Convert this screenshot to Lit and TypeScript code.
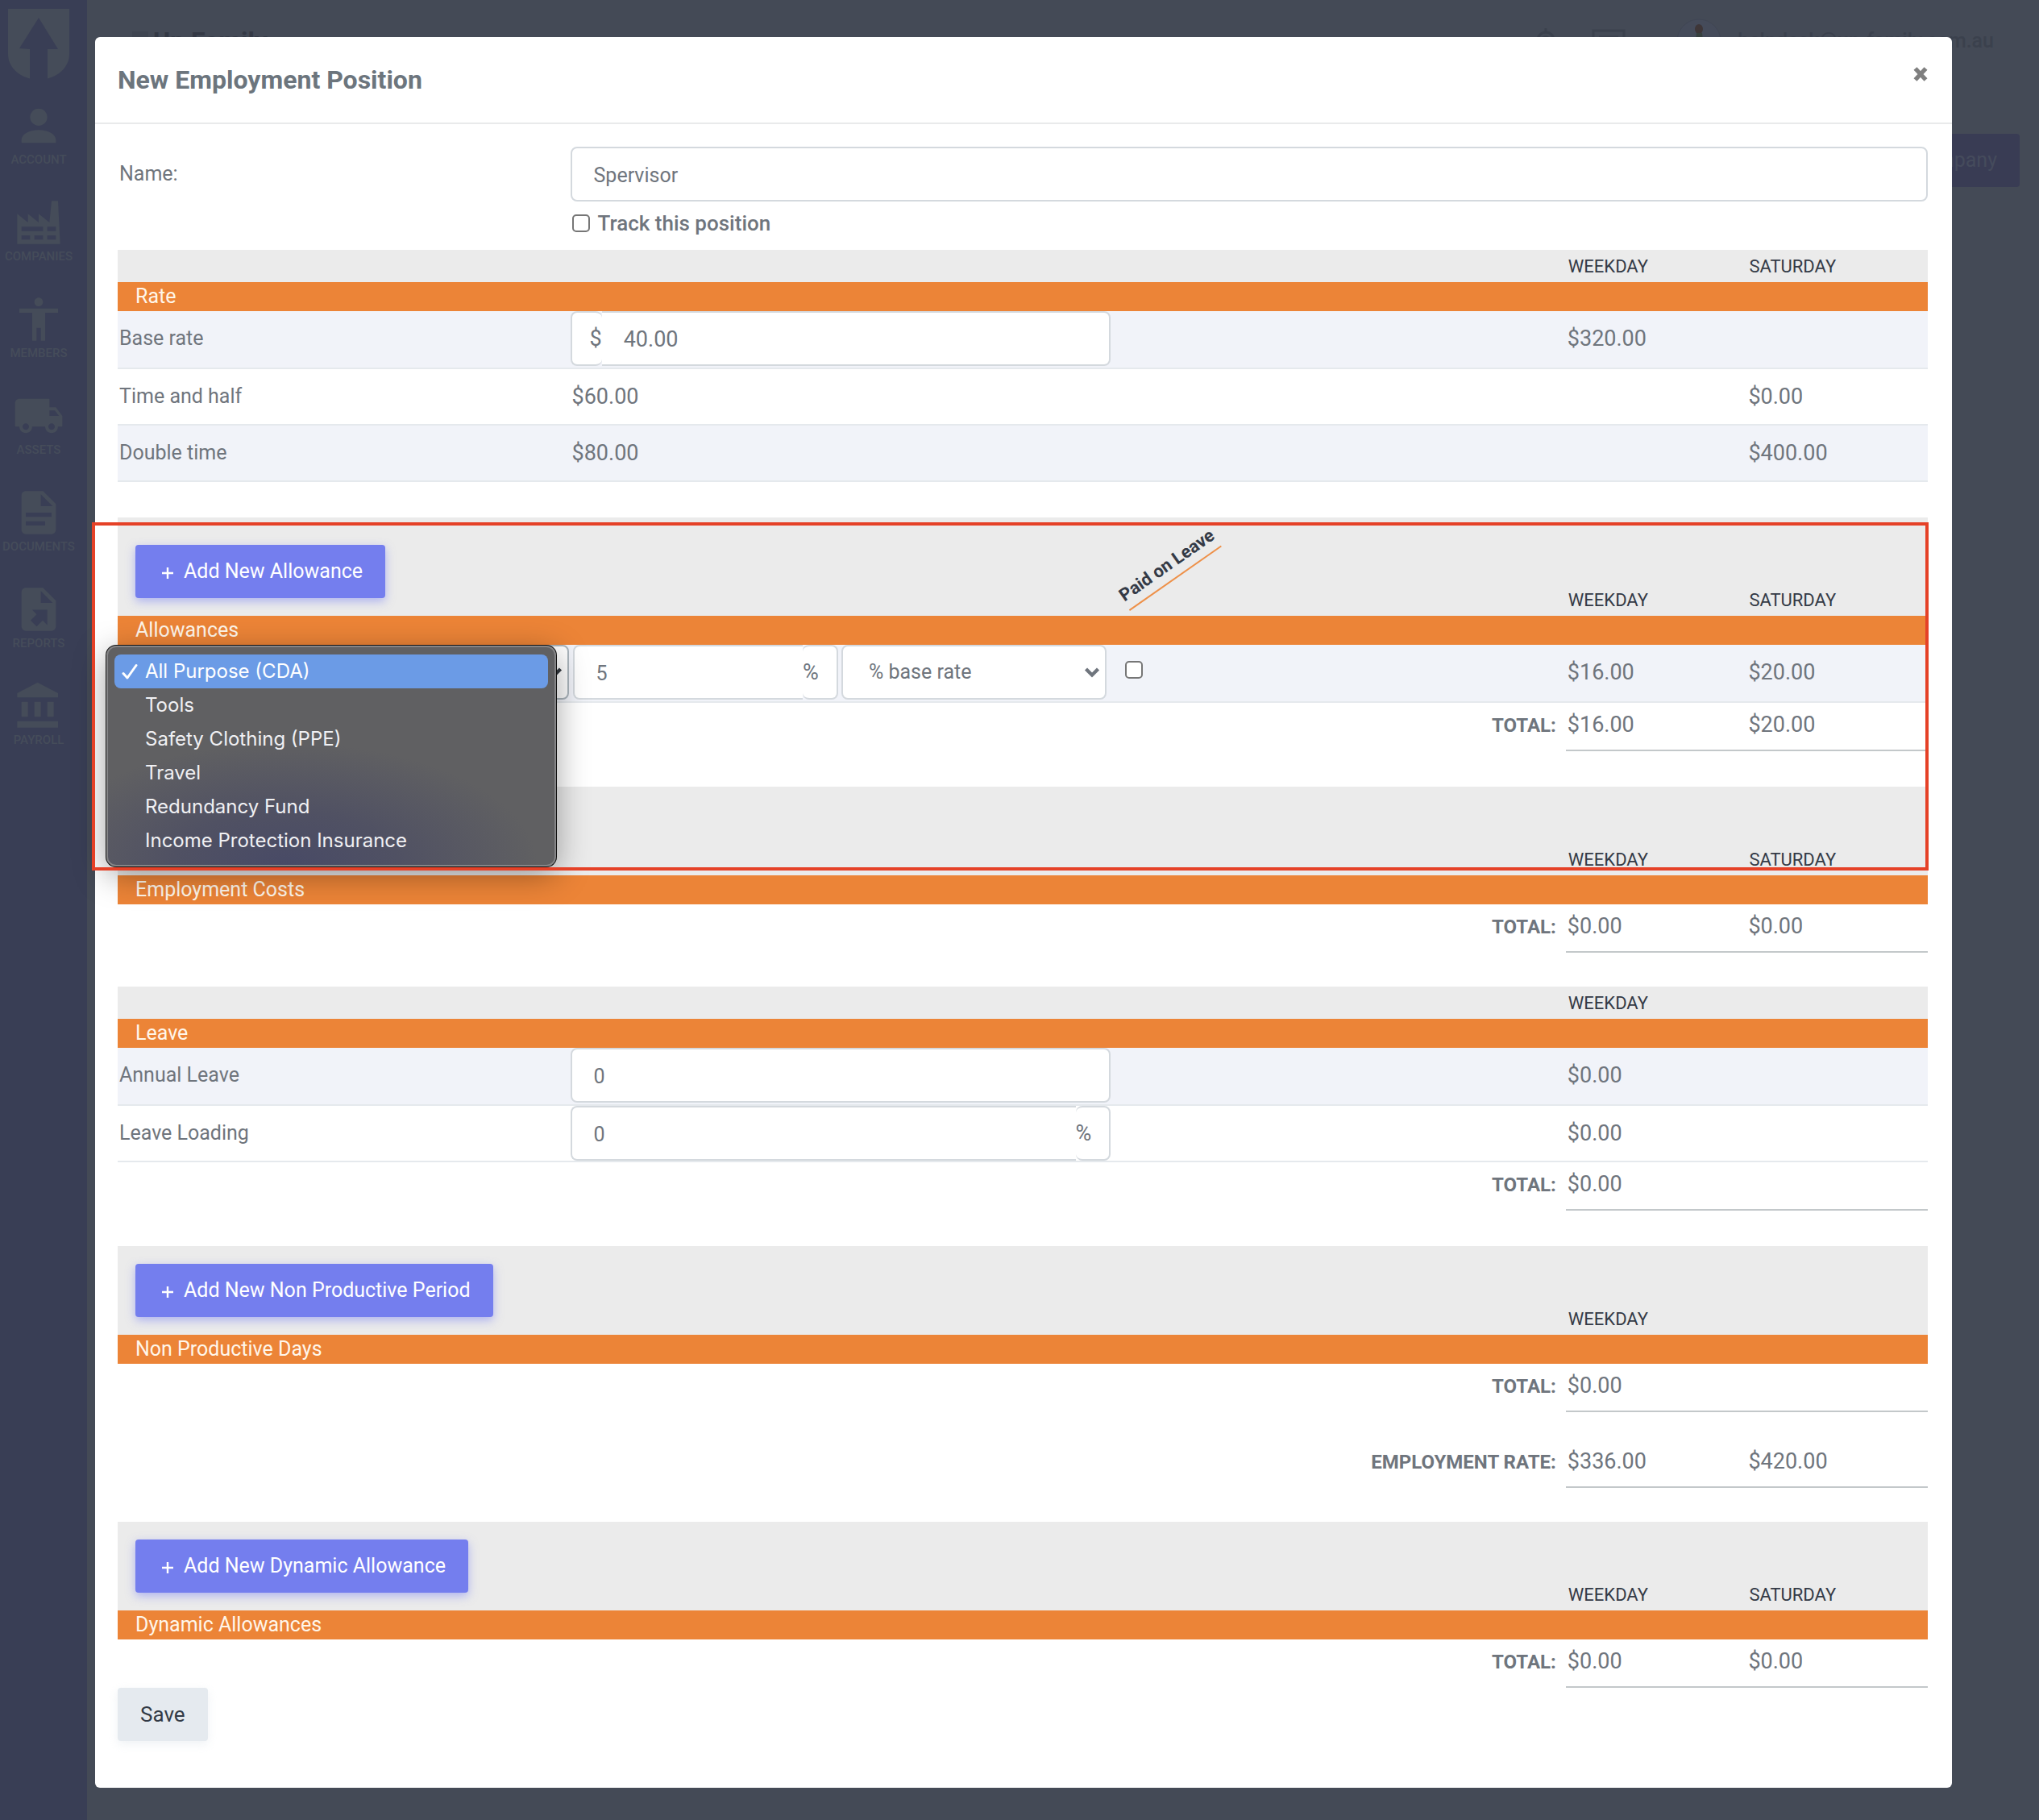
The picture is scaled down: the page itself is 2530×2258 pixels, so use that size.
import { LitElement, html, css, svg, nothing, TemplateResult } from "lit";
import { customElement, property } from "lit/decorators.js";

const ICONS: Record<string, string> = {
  account:
    "M12 12c2.21 0 4-1.79 4-4s-1.79-4-4-4-4 1.79-4 4 1.79 4 4 4zm0 2c-4.4 0-8 2-8 4.6V20h16v-1.4c0-2.6-3.6-4.6-8-4.6z",
  companies:
    "M4,18V20H8V18H4M4,14V16H14V14H4M10,18V20H14V18H10M16,14V16H20V14H16M16,18V20H20V18H16M2,22V8L7,12V8L12,12V8L17,12L18,2H21L22,22H2Z",
  members:
    "M12 2c1.1 0 2 .9 2 2s-.9 2-2 2-2-.9-2-2 .9-2 2-2zm9 7h-6v13h-2v-6h-2v6H9V9H3V7h18v2z",
  assets:
    "M20 8h-3V4H3c-1.1 0-2 .9-2 2v11h2c0 1.66 1.34 3 3 3s3-1.34 3-3h6c0 1.66 1.34 3 3 3s3-1.34 3-3h2v-5l-3-4zM6 18.5c-.83 0-1.5-.67-1.5-1.5s.67-1.5 1.5-1.5 1.5.67 1.5 1.5-.67 1.5-1.5 1.5zm13.5-9l1.96 2.5H17V9.5h2.5zm-1.5 9c-.83 0-1.5-.67-1.5-1.5s.67-1.5 1.5-1.5 1.5.67 1.5 1.5-.67 1.5-1.5 1.5z",
  documents:
    "M13,9H18.5L13,3.5V9M6,2H14L20,8V20A2,2 0 0,1 18,22H6C4.89,22 4,21.1 4,20V4C4,2.89 4.89,2 6,2M15,18V16H6V18H15M18,14V12H6V14H18Z",
  reports:
    "M6,2C4.89,2 4,2.9 4,4V20A2,2 0 0,0 6,22H18A2,2 0 0,0 20,20V8L14,2M13,3.5L18.5,9H13M8.93,12.22H16V19.29L13.88,17.17L11.05,20L8.22,17.17L11.05,14.35",
  payroll:
    "M11.5,1L2,6V8H21V6M16,10V17H19V10M2,22H21V19H2M10,10V17H13V10M4,10V17H7V10H4Z",
};

const ALLOWANCES = [
  "All Purpose (CDA)",
  "Tools",
  "Safety Clothing (PPE)",
  "Travel",
  "Redundancy Fund",
  "Income Protection Insurance",
];

const chevron = html`<svg class="chevron" viewBox="0 0 20 14" aria-hidden="true">
  <path d="M2.5 3 L10 10.5 L17.5 3" fill="none" stroke="currentColor" stroke-width="4.4" />
</svg>`;

/* The application that sits dimmed behind the dialog. */
@customElement("dimmed-app")
class DimmedApp extends LitElement {
  static styles = css`
    :host {
      display: grid;
      grid-template-columns: 108px 1fr;
      background: #444a56;
      font-family: Roboto, "Liberation Sans", sans-serif;
      overflow: hidden;
    }
    nav {
      display: flex;
      flex-direction: column;
      align-items: center;
      gap: 36px;
      padding: 11px 12px 0 0;
      background: #393e55;
    }
    .logo {
      width: 76px;
      height: 88px;
      margin-bottom: -11px;
      fill: #454c59;
    }
    nav a {
      display: flex;
      flex-direction: column;
      align-items: center;
      color: #454c5a;
      font-size: 15px;
      font-weight: 500;
      line-height: 20px;
      text-decoration: none;
    }
    nav a svg {
      width: 64px;
      height: 64px;
      fill: #454c59;
    }
    .main {
      display: flex;
      flex-direction: column;
    }
    header {
      display: flex;
      align-items: center;
      height: 102px;
      padding: 0 56px;
      color: #3b414d;
    }
    .mark {
      width: 20px;
      height: 24px;
      margin-right: 6px;
      background: #3f4551;
    }
    h1 {
      margin: 0;
      flex: 1;
      font-size: 32px;
      line-height: 40px;
      color: #343945;
    }
    .tool {
      width: 44px;
      height: 48px;
      margin-right: 34px;
      fill: none;
      stroke: #3b414d;
      stroke-width: 3;
    }
    .avatar {
      width: 56px;
      height: 56px;
      margin: 0 20px 0 28px;
    }
    .mail {
      font-size: 25px;
      line-height: 32px;
      font-weight: 500;
      color: #3b414d;
    }
    .actions {
      display: flex;
      justify-content: flex-end;
      padding: 64px 24px;
    }
    button {
      height: 66px;
      padding: 0 28px;
      border: 0;
      border-radius: 4px;
      background: #393c54;
      color: #454b5c;
      font: 400 25px/32px Roboto, "Liberation Sans", sans-serif;
    }
  `;

  render() {
    return html`
      <nav aria-label="Main">
        <svg class="logo" viewBox="0 0 76 88" aria-hidden="true">
          <path d="M0 0H76V56C76 70 66 82 49 86.500V50H62L38 11L14 49L27 50V86.500C10 82 0 70 0 56Z" />
        </svg>
        ${Object.entries(ICONS).map(
          ([name, d]) => html`<a href="#${name}">
            <svg viewBox="0 0 24 24" aria-hidden="true"><path fill-rule="evenodd" d=${d} /></svg>
            <span>${name.toUpperCase()}</span>
          </a>`
        )}
      </nav>
      <div class="main">
        <header>
          <span class="mark"></span>
          <h1>Up Family</h1>
          <svg class="tool" viewBox="0 0 44 48" aria-hidden="true">
            <path d="M22 8v5M12 38V23a10 10 0 0 1 20 0v15zM17 23a5 5 0 0 1 8-3" />
          </svg>
          <svg class="tool" viewBox="0 0 44 48" aria-hidden="true">
            <path d="M3 11h38v30H3zM10 19h24M10 27h24" />
          </svg>
          <svg class="avatar" viewBox="0 0 56 56" aria-hidden="true">
            <circle cx="28" cy="28" r="27" fill="#454b5a" stroke="#404654" />
            <ellipse cx="28" cy="13" rx="5" ry="6" fill="#3e3638" />
            <path d="M25 18h7l2 20H23z" fill="#37413f" />
          </svg>
          <span class="mail">helpdesk@up-family.com.au</span>
        </header>
        <div class="actions"><button type="button">Add New Company</button></div>
      </div>
    `;
  }
}

interface Section {
  title: string;
  add?: string;
  tall?: boolean;
  paidOnLeave?: boolean;
  saturday?: boolean;
  rows?: TemplateResult[];
  totals?: { label: string; values: string[] }[];
}

@customElement("app-root")
class AppRoot extends LitElement {
  @property() positionName = "Spervisor";

  static styles = css`
    * {
      box-sizing: border-box;
    }
    :host {
      display: block;
      position: relative;
      min-height: 100vh;
      overflow: hidden;
      font: 400 25px/32px Roboto, "Liberation Sans", sans-serif;
      color: #6f757d;
    }
    dimmed-app {
      position: absolute;
      inset: 0;
    }
    .modal {
      position: relative;
      margin: 46px 108px 40px 118px;
      border-radius: 6px;
      background: #fff;
    }
    .modal-header {
      display: flex;
      align-items: center;
      justify-content: space-between;
      height: 108px;
      padding: 0 30px 0 28px;
      border-bottom: 2px solid #e9eaeb;
    }
    h2 {
      margin: 0;
      font-size: 32px;
      line-height: 40px;
      font-weight: 700;
      color: #6c757d;
    }
    .close {
      display: flex;
      margin-bottom: 14px;
      padding: 0;
      border: 0;
      background: none;
      color: #7f7f7f;
    }
    .close svg {
      width: 18px;
      height: 18px;
    }
    form {
      padding: 28px 30px 58px 28px;
    }
    .name-row {
      display: grid;
      grid-template-columns: 25% 1fr;
      align-items: center;
    }
    .name-row > label {
      padding-left: 2px;
    }
    .track {
      grid-column: 2;
      display: flex;
      align-items: center;
      gap: 10px;
      height: 54px;
      margin-bottom: 6px;
      font-size: 26px;
      font-weight: 500;
    }
    input,
    select {
      font: inherit;
      color: inherit;
      min-width: 0;
    }
    .box {
      width: 100%;
      height: 68px;
      padding: 2px 27px 0;
      border: 2px solid #d4d9de;
      border-radius: 8px;
      background: #fff;
      outline: none;
    }
    input.num {
      font-size: 27px;
    }
    input[type="checkbox"] {
      appearance: none;
      display: block;
      flex: none;
      width: 22px;
      height: 22px;
      margin: 0;
      border: 2px solid #767676;
      border-radius: 5px;
      background: #fff;
    }
    .group {
      display: flex;
      width: 100%;
    }
    .addon {
      display: flex;
      align-items: center;
      height: 68px;
      border: 2px solid #d4d9de;
      border-radius: 8px;
      background: #fff;
      font-size: 27px;
    }
    .addon.pre {
      padding-left: 22px;
      border-right: 0;
    }
    .addon.post {
      padding-right: 22px;
      border-left: 0;
    }
    .group .pre + .box {
      border-left: 0;
      border-radius: 0 8px 8px 0;
    }
    .group .box:not(:last-child) {
      border-right: 0;
      border-radius: 8px 0 0 8px;
    }
    .pick {
      position: relative;
      display: grid;
      width: 100%;
      align-items: center;
    }
    .pick select {
      grid-area: 1 / 1;
      appearance: none;
      padding: 0 32px;
    }
    .pick .chevron {
      grid-area: 1 / 1;
      justify-self: end;
      width: 20px;
      height: 14px;
      margin-right: 8px;
      pointer-events: none;
    }
    .pick.open select {
      border-color: #abb5bc;
    }
    .pick.open .chevron {
      color: #343a40;
    }
    .pair {
      display: grid;
      grid-template-columns: 1fr 1fr;
      gap: 4px;
    }

    table {
      width: 100%;
      table-layout: fixed;
      border-collapse: separate;
      border-spacing: 0;
      margin-bottom: 44px;
    }
    table.bare {
      margin-bottom: 42px;
    }
    table.last {
      margin-bottom: 0;
    }
    .label-col {
      width: 25%;
    }
    .field-col {
      width: 30%;
    }
    .flag-col {
      width: 25%;
    }
    .day-col {
      width: 10%;
    }
    th,
    td {
      padding: 0;
      text-align: left;
      font-weight: 400;
    }
    .heads th {
      height: 40px;
      padding: 0 3px 7px;
      vertical-align: bottom;
      background: #ebebeb;
      color: #343a46;
      font-size: 22px;
      line-height: 24px;
    }
    .heads.tall th {
      height: 110px;
    }
    .heads.slanted th {
      height: 122px;
    }
    .heads th.add {
      padding: 0 22px 22px;
    }
    .heads th.flag {
      position: relative;
    }
    .slant {
      position: absolute;
      left: 21px;
      bottom: 6px;
      width: 139px;
      padding: 0 1px 6px;
      border-bottom: 2px solid #ee9048;
      font-size: 22px;
      font-weight: 700;
      white-space: nowrap;
      transform: rotate(-35deg);
      transform-origin: left bottom;
    }
    .title th {
      height: 36px;
      padding: 0 22px;
      background: #ec8437;
      color: #fff6ea;
    }
    .line td,
    .line th {
      height: 70px;
      padding: 0 2px;
      border-bottom: 2px solid #e5e9ed;
      vertical-align: middle;
    }
    .line .num,
    .sum .num {
      font-size: 27px;
    }
    .line.shade td,
    .line.shade th {
      background: #f1f3f9;
    }
    .line.field td,
    .line.field th {
      height: 72px;
      padding-bottom: 2px;
    }
    .line.tight td,
    .line.tight th {
      height: 70px;
      padding-bottom: 0;
    }
    .line td.control {
      padding-left: 0;
      padding-right: 3px;
      vertical-align: top;
    }
    .line td.duo {
      padding-left: 3px;
      padding-right: 8px;
    }
    .line td.tick {
      padding: 20px 15px;
      vertical-align: top;
    }
    .sum th,
    .sum td {
      height: 60px;
      padding: 0 2px 4px;
    }
    .sum th {
      padding-right: 12px;
      text-align: right;
      font-weight: 700;
      font-size: 24px;
    }
    .sum td {
      border-bottom: 2px solid #c3c8ca;
    }
    .spacer td {
      height: 34px;
    }

    .btn {
      display: inline-flex;
      align-items: center;
      gap: 12px;
      height: 66px;
      padding: 0 28px;
      border: 0;
      border-radius: 4px;
      font: inherit;
    }
    .btn.primary {
      padding-left: 32px;
      background: #747eee;
      color: #fff;
      box-shadow: 0 4px 12px rgba(114, 124, 245, 0.5);
      font-size: 25px;
      line-height: 32px;
      white-space: nowrap;
    }
    .btn.primary svg {
      width: 16px;
      height: 16px;
      margin-top: 4px;
      stroke: currentColor;
      stroke-width: 2.4;
    }
    .btn.save {
      display: flex;
      background: #e5eaef;
      color: #323a46;
      box-shadow: 0 4px 12px rgba(229, 234, 239, 0.6);
      font-size: 26px;
    }

    .marked {
      position: relative;
    }
    .marker {
      position: absolute;
      z-index: 3;
      inset: 6px -1px 102px -32px;
      border: 4px solid #e54127;
      pointer-events: none;
    }

    .menu {
      position: absolute;
      z-index: 2;
      top: 1px;
      left: -16px;
      width: 100%;
      margin: 0;
      padding: 9px 8px;
      list-style: none;
      border: 2px solid #858587;
      border-radius: 12px;
      background: radial-gradient(ellipse 56% 56% at 40% 100%, #484a66 0%, #505163 45%, rgba(96, 96, 98, 0) 100%), #606062;
      background-origin: border-box;
      box-shadow:
        0 0 0 1px #111,
        0 10px 40px rgba(0, 0, 0, 0.38);
      font: 400 24px/42px Inter, "Liberation Sans", sans-serif;
      color: #f0f0f3;
    }
    .menu li {
      display: flex;
      align-items: center;
      height: 42px;
      padding-left: 9px;
      border-radius: 8px;
    }
    .menu li svg {
      width: 20px;
      height: 20px;
      margin-right: 9px;
      fill: none;
      stroke: #fff;
      stroke-width: 3;
      stroke-linecap: round;
      stroke-linejoin: round;
    }
    .menu li[aria-selected="true"] {
      background: #6b9be6;
      color: #fff;
    }
  `;

  private section(s: Section, last = false) {
    const size = s.paidOnLeave ? "slanted" : s.tall ? "tall" : "";
    return html`
      <table class=${last ? "last" : s.rows ? "" : "bare"}>
        <colgroup>
          <col class="label-col" />
          <col class="field-col" />
          <col class="flag-col" />
          <col class="day-col" />
          <col class="day-col" />
        </colgroup>
        <thead>
          <tr class="heads ${size}">
            <th class="add" colspan="2">
              ${s.add
                ? html`<button class="btn primary" type="button">
                    <svg viewBox="0 0 16 16" aria-hidden="true"><path d="M8 1V15M1 8H15" /></svg>
                    ${s.add}
                  </button>`
                : nothing}
            </th>
            <th class="flag">${s.paidOnLeave ? html`<span class="slant">Paid on Leave</span>` : nothing}</th>
            <th scope="col">WEEKDAY</th>
            <th scope="col">${s.saturday ? "SATURDAY" : nothing}</th>
          </tr>
          <tr class="title">
            <th colspan="5">${s.title}</th>
          </tr>
        </thead>
        <tbody>
          ${s.rows ?? nothing}
          ${(s.totals ?? []).map(
            (t, i) => html`
              ${i > 0 ? html`<tr class="spacer"><td colspan="5"></td></tr>` : nothing}
              <tr class="sum">
                <th colspan="3" scope="row">${t.label}</th>
                <td class="num">${t.values[0]}</td>
                <td class="num">${t.values[1] ?? nothing}</td>
              </tr>
            `
          )}
        </tbody>
      </table>
    `;
  }

  render() {
    return html`
      <dimmed-app inert></dimmed-app>
      <div class="modal" role="dialog" aria-labelledby="dialog-title">
        <div class="modal-header">
          <h2 id="dialog-title">New Employment Position</h2>
          <button class="close" type="button" aria-label="Close">
            <svg viewBox="0 0 18 18" aria-hidden="true">
              <path d="M2.500 2L15.500 16M15.500 2L2.500 16" stroke="currentColor" stroke-width="5.400" />
            </svg>
          </button>
        </div>
        <form>
          <div class="name-row">
            <label for="name">Name:</label>
            <input class="box" id="name" type="text" .value=${this.positionName} />
            <label class="track"><input type="checkbox" />Track this position</label>
          </div>

          ${this.section({
            title: "Rate",
            saturday: true,
            rows: [
              html`<tr class="line shade field">
                <th scope="row"><label for="base">Base rate</label></th>
                <td class="control">
                  <div class="group">
                    <span class="addon pre">$</span>
                    <input class="box num" id="base" type="text" value="40.00" />
                  </div>
                </td>
                <td></td>
                <td class="num">$320.00</td>
                <td></td>
              </tr>`,
              html`<tr class="line">
                <th scope="row">Time and half</th>
                <td class="num">$60.00</td>
                <td></td>
                <td></td>
                <td class="num">$0.00</td>
              </tr>`,
              html`<tr class="line shade">
                <th scope="row">Double time</th>
                <td class="num">$80.00</td>
                <td></td>
                <td></td>
                <td class="num">$400.00</td>
              </tr>`,
            ],
          })}

          <div class="marked">
            ${this.section({
              title: "Allowances",
              add: "Add New Allowance",
              paidOnLeave: true,
              saturday: true,
              rows: [
                html`<tr class="line shade field">
                  <th scope="row">
                    <div class="pick open">
                      <select class="box" aria-label="Allowance type">
                        ${ALLOWANCES.map((a) => html`<option>${a}</option>`)}
                      </select>
                      ${chevron}
                      <ul class="menu" role="listbox" aria-label="Allowance types">
                        ${ALLOWANCES.map(
                          (a, i) => html`<li role="option" aria-selected=${i === 0 ? "true" : "false"}>
                            <svg viewBox="0 0 20 20" aria-hidden="true">
                              ${i === 0 ? svg`<path d="M2 12.500L7 18L18 2.500" />` : nothing}
                            </svg>
                            ${a}
                          </li>`
                        )}
                      </ul>
                    </div>
                  </th>
                  <td class="control duo">
                    <div class="pair">
                      <div class="group">
                        <input class="box" type="text" value="5" aria-label="Allowance amount" />
                        <span class="addon post">%</span>
                      </div>
                      <div class="pick">
                        <select class="box" aria-label="Allowance unit">
                          <option>% base rate</option>
                        </select>
                        ${chevron}
                      </div>
                    </div>
                  </td>
                  <td class="tick"><input type="checkbox" aria-label="Paid on Leave" /></td>
                  <td class="num">$16.00</td>
                  <td class="num">$20.00</td>
                </tr>`,
              ],
              totals: [{ label: "TOTAL:", values: ["$16.00", "$20.00"] }],
            })}
            ${this.section({
              title: "Employment Costs",
              tall: true,
              saturday: true,
              totals: [{ label: "TOTAL:", values: ["$0.00", "$0.00"] }],
            })}
            <div class="marker"></div>
          </div>

          ${this.section({
            title: "Leave",
            rows: [
              html`<tr class="line shade field">
                <th scope="row"><label for="annual">Annual Leave</label></th>
                <td class="control"><input class="box" id="annual" type="text" value="0" /></td>
                <td></td>
                <td class="num">$0.00</td>
                <td></td>
              </tr>`,
              html`<tr class="line field tight">
                <th scope="row"><label for="loading">Leave Loading</label></th>
                <td class="control">
                  <div class="group">
                    <input class="box" id="loading" type="text" value="0" />
                    <span class="addon post">%</span>
                  </div>
                </td>
                <td></td>
                <td class="num">$0.00</td>
                <td></td>
              </tr>`,
            ],
            totals: [{ label: "TOTAL:", values: ["$0.00"] }],
          })}
          ${this.section({
            title: "Non Productive Days",
            add: "Add New Non Productive Period",
            tall: true,
            totals: [
              { label: "TOTAL:", values: ["$0.00"] },
              { label: "EMPLOYMENT RATE:", values: ["$336.00", "$420.00"] },
            ],
          })}
          ${this.section(
            {
              title: "Dynamic Allowances",
              add: "Add New Dynamic Allowance",
              tall: true,
              saturday: true,
              totals: [{ label: "TOTAL:", values: ["$0.00", "$0.00"] }],
            },
            true
          )}

          <button class="btn save" type="submit">Save</button>
        </form>
      </div>
    `;
  }
}
